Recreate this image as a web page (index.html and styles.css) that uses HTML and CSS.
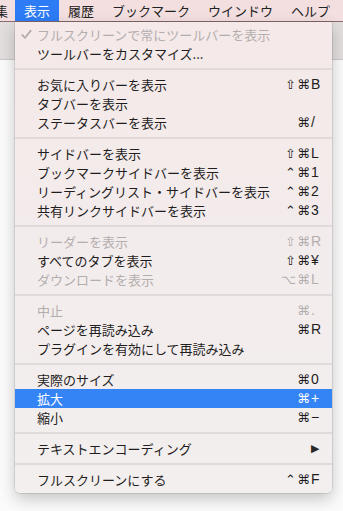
FILE: index.html
```html
<!DOCTYPE html>
<html lang="ja">
<head>
<meta charset="utf-8">
<title>表示メニュー</title>
<link rel="stylesheet" href="styles.css">
</head>
<body>
<div class="menubar">
  <span class="mb-item first">編集</span>
  <span class="mb-item active">表示</span>
  <span class="mb-item">履歴</span>
  <span class="mb-item">ブックマーク</span>
  <span class="mb-item">ウインドウ</span>
  <span class="mb-item">ヘルプ</span>
</div>
<div class="window">
  <div class="toolbar"></div>
  <div class="content"></div>
</div>
<div class="menu">
  <div class="item disabled">
    <span class="gutter"><svg class="check" viewBox="0 0 12 12" width="11" height="11"><path d="M1.5 6.6 L4.4 9.6 L10.6 1.8" fill="none" stroke="currentColor" stroke-width="2" stroke-linecap="round" stroke-linejoin="round"/></svg></span>
    <span class="label">フルスクリーンで常にツールバーを表示</span><span class="mods"></span><span class="key"></span>
  </div>
  <div class="item"><span class="gutter"></span><span class="label">ツールバーをカスタマイズ...</span><span class="mods"></span><span class="key"></span></div>
  <div class="sep"></div>
  <div class="item"><span class="gutter"></span><span class="label">お気に入りバーを表示</span><span class="mods">⇧⌘</span><span class="key">B</span></div>
  <div class="item"><span class="gutter"></span><span class="label">タブバーを表示</span><span class="mods"></span><span class="key"></span></div>
  <div class="item"><span class="gutter"></span><span class="label">ステータスバーを表示</span><span class="mods">⌘</span><span class="key">/</span></div>
  <div class="sep"></div>
  <div class="item"><span class="gutter"></span><span class="label">サイドバーを表示</span><span class="mods">⇧⌘</span><span class="key">L</span></div>
  <div class="item"><span class="gutter"></span><span class="label">ブックマークサイドバーを表示</span><span class="mods">⌃⌘</span><span class="key">1</span></div>
  <div class="item"><span class="gutter"></span><span class="label">リーディングリスト・サイドバーを表示</span><span class="mods">⌃⌘</span><span class="key">2</span></div>
  <div class="item"><span class="gutter"></span><span class="label">共有リンクサイドバーを表示</span><span class="mods">⌃⌘</span><span class="key">3</span></div>
  <div class="sep"></div>
  <div class="item disabled"><span class="gutter"></span><span class="label">リーダーを表示</span><span class="mods">⇧⌘</span><span class="key">R</span></div>
  <div class="item"><span class="gutter"></span><span class="label">すべてのタブを表示</span><span class="mods">⇧⌘</span><span class="key">¥</span></div>
  <div class="item disabled"><span class="gutter"></span><span class="label">ダウンロードを表示</span><span class="mods">⌥⌘</span><span class="key">L</span></div>
  <div class="sep"></div>
  <div class="item disabled"><span class="gutter"></span><span class="label">中止</span><span class="mods">⌘</span><span class="key">.</span></div>
  <div class="item"><span class="gutter"></span><span class="label">ページを再読み込み</span><span class="mods">⌘</span><span class="key">R</span></div>
  <div class="item"><span class="gutter"></span><span class="label">プラグインを有効にして再読み込み</span><span class="mods"></span><span class="key"></span></div>
  <div class="sep"></div>
  <div class="item"><span class="gutter"></span><span class="label">実際のサイズ</span><span class="mods">⌘</span><span class="key">0</span></div>
  <div class="item selected"><span class="gutter"></span><span class="label">拡大</span><span class="mods">⌘</span><span class="key">+</span></div>
  <div class="item"><span class="gutter"></span><span class="label">縮小</span><span class="mods">⌘</span><span class="key">−</span></div>
  <div class="sep"></div>
  <div class="item"><span class="gutter"></span><span class="label">テキストエンコーディング</span><span class="mods"></span><span class="key arrow">▶</span></div>
  <div class="sep"></div>
  <div class="item"><span class="gutter"></span><span class="label">フルスクリーンにする</span><span class="mods">⌃⌘</span><span class="key">F</span></div>
</div>
</body>
</html>
```

FILE: styles.css
```css
html, body {
  margin: 0;
  padding: 0;
}
body {
  width: 343px;
  height: 511px;
  overflow: hidden;
  position: relative;
  background: #fcfbfb;
  font-family: "Noto Sans CJK JP", "Liberation Sans", sans-serif;
  color: #1f1d1d;
}
.menubar {
  display: flex;
  height: 22px;
  background: #f3dfe0;
  border-bottom: 1px solid #8d6f6f;
  box-sizing: border-box;
  white-space: nowrap;
  overflow: hidden;
}
.mb-item {
  font-size: 13px;
  line-height: 21px;
  padding: 0 9px;
  color: #222;
}
.mb-item.first {
  margin-left: -18px;
  padding: 0 7px 0 0;
}
.mb-item.active {
  background: #2d7cf6;
  color: #fff;
}
.window {
  display: flex;
  flex-direction: column;
}
.toolbar {
  height: 37px;
  background: #e2dede;
  border-bottom: 1px solid #cdc8c8;
}
.content {
  height: 440px;
  background: #fcfbfb;
}
.menu {
  position: absolute;
  left: 15px;
  top: 22px;
  width: 317px;
  box-sizing: border-box;
  padding: 3px 0 4px;
  background: linear-gradient(180deg, #f5e9e9 0%, #f3ecec 50%, #f2efee 100%);
  border-radius: 0 0 5px 5px;
  box-shadow: 0 0 0 0.5px rgba(0,0,0,0.18), 0 6px 16px rgba(0,0,0,0.22);
}
.item {
  display: grid;
  grid-template-columns: 22px 1fr auto 11px;
  align-items: center;
  height: 19px;
  padding-right: 10px;
  font-size: 13px;
  line-height: 19px;
  color: #1f1d1d;
  white-space: nowrap;
}
.item.disabled {
  color: #b3aeae;
}
.item.selected {
  background: #3584f6;
  color: #fff;
}
.gutter {
  display: flex;
  align-items: center;
  padding-left: 6px;
  height: 19px;
}
.check {
  display: block;
}
.mods {
  font-family: "DejaVu Sans", "Liberation Sans", sans-serif;
  font-size: 13px;
  text-align: right;
  letter-spacing: 1px;
}
.key {
  font-family: "Liberation Sans", "DejaVu Sans", sans-serif;
  font-size: 14px;
}
.key.arrow {
  font-family: "DejaVu Sans", sans-serif;
  font-size: 11px;
  color: #2a2828;
}
.sep {
  height: 12px;
  display: flex;
  align-items: center;
}
.sep::before {
  content: "";
  display: block;
  width: 100%;
  height: 2px;
  background: #e0dada;
}
```
